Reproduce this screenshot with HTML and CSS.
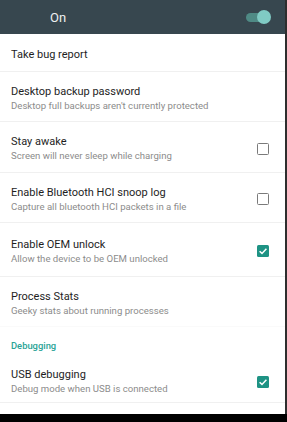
FILE: index.html
```html
<!DOCTYPE html>
<html>
<head>
<meta charset="utf-8">
<link rel="stylesheet" href="styles.css">
</head>
<body>
<div class="screen">
  <div class="panel">
    <header class="bar">
      <span class="bar-label">On</span>
      <span class="switch"><span class="switch-thumb"></span></span>
    </header>
    <div class="row row-single"><div class="text"><div class="title">Take bug report</div></div></div>
    <div class="row row-50"><div class="text"><div class="title">Desktop backup password</div><div class="summary">Desktop full backups aren't currently protected</div></div></div>
    <div class="row"><div class="text"><div class="title">Stay awake</div><div class="summary">Screen will never sleep while charging</div></div><span class="check"></span></div>
    <div class="row row-50"><div class="text"><div class="title">Enable Bluetooth HCI snoop log</div><div class="summary">Capture all bluetooth HCI packets in a file</div></div><span class="check"></span></div>
    <div class="row row-tall"><div class="text"><div class="title">Enable OEM unlock</div><div class="summary">Allow the device to be OEM unlocked</div></div><span class="check checked"><svg viewBox="0 0 12 12" width="12" height="12"><path d="M2.6 6.2 L5 8.4 L9.4 3.8" fill="none" stroke="#fff" stroke-width="1.5"/></svg></span></div>
    <div class="row row-nodiv"><div class="text"><div class="title">Process Stats</div><div class="summary">Geeky stats about running processes</div></div></div>
    <div class="category">Debugging</div>
    <div class="row row-usb"><div class="text"><div class="title">USB debugging</div><div class="summary">Debug mode when USB is connected</div></div><span class="check checked"><svg viewBox="0 0 12 12" width="12" height="12"><path d="M2.6 6.2 L5 8.4 L9.4 3.8" fill="none" stroke="#fff" stroke-width="1.5"/></svg></span></div>
    <div class="spacer"></div>
  </div>
  <div class="edge"></div>
</div>
<div class="navbar"></div>
</body>
</html>
```
FILE: styles.css
```css
html, body {
  margin: 0;
  padding: 0;
  background: #000;
}
body {
  width: 287px;
  height: 422px;
  overflow: hidden;
  font-family: Roboto, "Noto Sans", sans-serif;
}
.screen {
  display: flex;
  height: 414px;
}
.panel {
  width: 285px;
  background: #fff;
  display: flex;
  flex-direction: column;
}
.edge {
  width: 2px;
  background: #2e2e2e;
}
.bar {
  height: 34px;
  background: #37474f;
  display: flex;
  align-items: center;
  padding-left: 50px;
  padding-right: 17px;
  box-sizing: border-box;
}
.bar-label {
  color: #eef0f0;
  font-size: 13px;
  flex: 1;
  padding-top: 1px;
}
.switch {
  width: 22px;
  height: 9px;
  border-radius: 5px;
  background: #4f8a85;
  display: flex;
  align-items: center;
  justify-content: flex-end;
}
.switch-thumb {
  width: 14px;
  height: 14px;
  border-radius: 50%;
  background: #80cbc4;
  margin-right: -3px;
}
.row {
  display: flex;
  align-items: center;
  height: 51px;
  padding: 3px 16px 0 11px;
  border-bottom: 1px solid #f0f0f0;
  box-sizing: border-box;
  flex: none;
}
.row-single { height: 38px; padding-top: 4px; }
.row-50 { height: 50px; }
.row-tall { height: 54px; }
.row-nodiv { border-bottom-color: #fafafa; height: 50px; }
.row-usb { height: 46px; padding-top: 4px; }
.text { flex: 1; }
.title {
  font-size: 11px;
  color: #1e1e1e;
  line-height: 15px;
}
.summary {
  font-size: 9.6px;
  color: #8c8c8c;
  line-height: 14px;
}
.category {
  height: 30px;
  box-sizing: border-box;
  padding: 13px 0 0 11px;
  font-size: 9.4px;
  line-height: 12px;
  font-weight: 500;
  color: #2aa396;
  flex: none;
}
.check {
  width: 12px;
  height: 12px;
  border: 1.6px solid #7a7a7a;
  border-radius: 1.5px;
  box-sizing: border-box;
  display: flex;
  align-items: center;
  justify-content: center;
}
.check.checked {
  border: none;
  background: #1e9384;
}
.spacer { flex: 1; }
.navbar {
  height: 8px;
  background: #000;
}
```
